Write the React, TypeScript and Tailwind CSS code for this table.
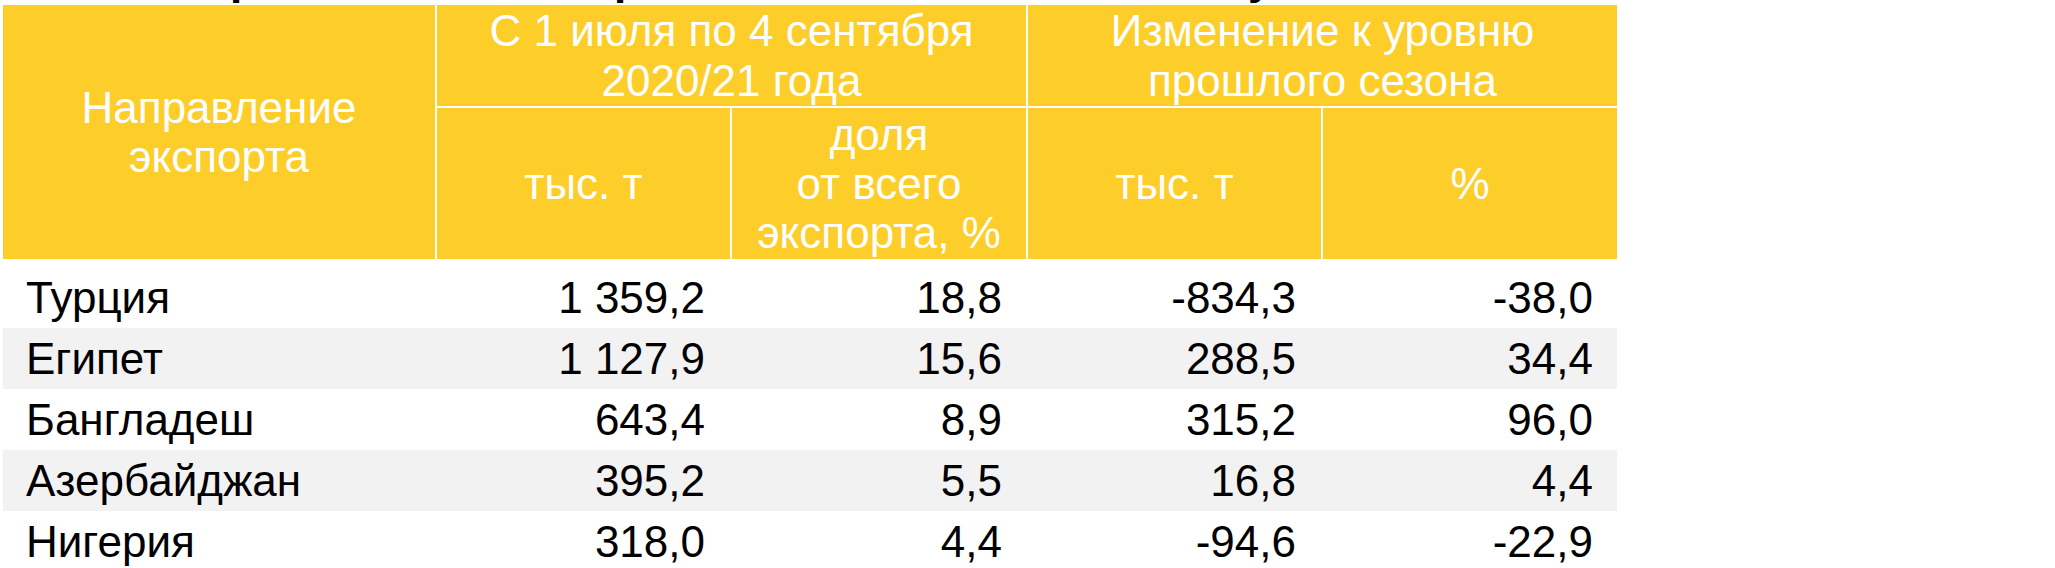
import React from "react";

const rows = [
  ["Турция", "1 359,2", "18,8", "-834,3", "-38,0"],
  ["Египет", "1 127,9", "15,6", "288,5", "34,4"],
  ["Бангладеш", "643,4", "8,9", "315,2", "96,0"],
  ["Азербайджан", "395,2", "5,5", "16,8", "4,4"],
  ["Нигерия", "318,0", "4,4", "-94,6", "-22,9"],
];

export default function App() {
  return (
    <div
      className="w-[2055px] h-[568px] bg-white overflow-hidden text-[44px]"
      style={{ fontFamily: '"Liberation Sans", Arial, sans-serif' }}
    >
      {/* cut-off title above the table: only descenders remain visible */}
      <div className="h-[5px] overflow-hidden">
        <div className="flex mt-[-43px] leading-[44px] font-bold text-black whitespace-nowrap">
          <div className="w-[230px] shrink-0" />
          <div className="w-[30px] shrink-0">р</div>
          <div className="w-[354px] shrink-0" />
          <div className="w-[30px] shrink-0">р</div>
          <div className="w-[604px] shrink-0" />
          <div className="w-[30px] shrink-0">у</div>
        </div>
      </div>
      <div className="pl-[3px] w-[1617px]">
        <div className="grid grid-cols-[432px_293px_294px_293px_294px] grid-rows-[101px_151px] gap-[2px] text-white text-center leading-[49px]">
          <div className="row-span-2 bg-[#FDCE29] flex items-center justify-center">
            <div>
              Направление
              <br />
              экспорта
            </div>
          </div>
          <div className="col-span-2 bg-[#FDCE29] flex items-center justify-center leading-[50px]">
            <div>
              С 1 июля по 4 сентября
              <br />
              2020/21 года
            </div>
          </div>
          <div className="col-span-2 bg-[#FDCE29] flex items-center justify-center leading-[50px]">
            <div>
              Изменение к уровню
              <br />
              прошлого сезона
            </div>
          </div>
          <div className="bg-[#FDCE29] flex items-center justify-center">тыс. т</div>
          <div className="bg-[#FDCE29] flex items-center justify-center">
            <div>
              доля
              <br />
              от всего
              <br />
              экспорта, %
            </div>
          </div>
          <div className="bg-[#FDCE29] flex items-center justify-center">тыс. т</div>
          <div className="bg-[#FDCE29] flex items-center justify-center">%</div>
        </div>
        <div className="mt-[8px] text-black">
          {rows.map((r, i) => (
            <div
              key={i}
              className={`grid grid-cols-[432px_293px_294px_293px_294px] gap-x-[2px] h-[61px] leading-[61px] ${
                i % 2 === 1 ? "bg-[#F2F2F2]" : "bg-white"
              }`}
            >
              <div className="pl-[23px] whitespace-nowrap">{r[0]}</div>
              <div className="text-right pr-[25px] whitespace-nowrap">{r[1]}</div>
              <div className="text-right pr-[24px] whitespace-nowrap">{r[2]}</div>
              <div className="text-right pr-[25px] whitespace-nowrap">{r[3]}</div>
              <div className="text-right pr-[24px] whitespace-nowrap">{r[4]}</div>
            </div>
          ))}
        </div>
      </div>
    </div>
  );
}
